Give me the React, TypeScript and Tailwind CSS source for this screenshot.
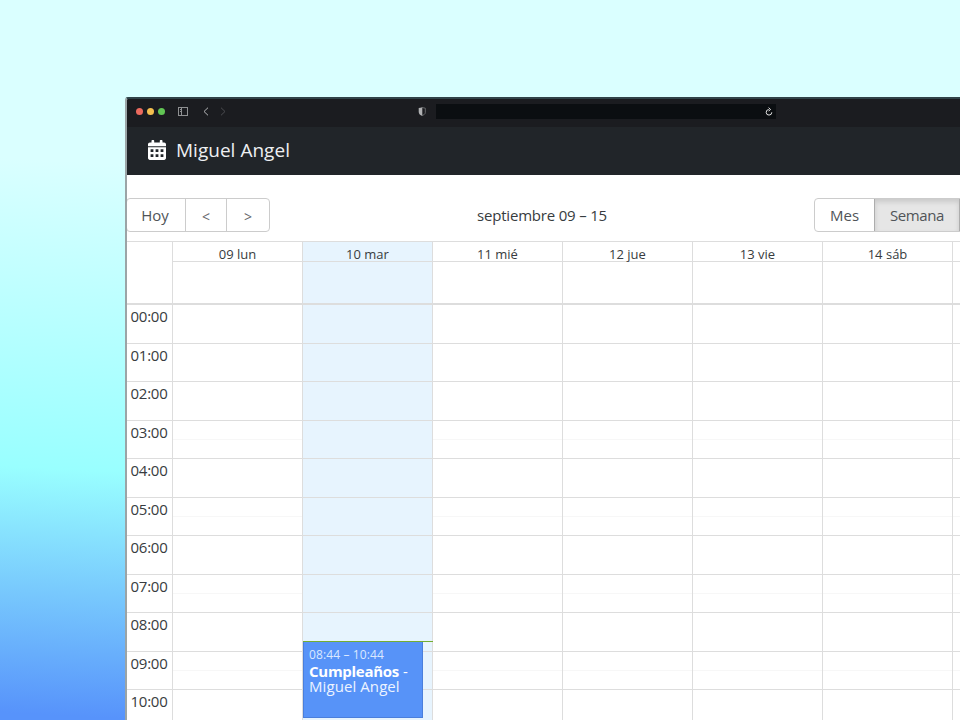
import React from "react";

const hours = ["00:00", "01:00", "02:00", "03:00", "04:00", "05:00", "06:00", "07:00", "08:00", "09:00", "10:00"];
const days = ["09 lun", "10 mar", "11 mié", "12 jue", "13 vie", "14 sáb", ""];

function TitleBar() {
  return (
    <div className="flex h-[28px] shrink-0 items-center bg-[#1b1c20] pb-[4px] pl-[10px]">
      <div className="flex gap-[4px]">
        <i className="size-[7px] rounded-full bg-[#ec6a5e]" />
        <i className="size-[7px] rounded-full bg-[#f4bf4f]" />
        <i className="size-[7px] rounded-full bg-[#61c554]" />
      </div>
      <svg className="ml-[13px]" width="10" height="9" viewBox="0 0 10 9" fill="none" stroke="#8f9092" strokeWidth="1" shapeRendering="crispEdges">
        <path d="M.5.5h9v8h-9zM3.500.5v8M1.500 2.500h1M1.500 4.500h1" />
      </svg>
      <svg className="ml-[15px]" width="6" height="9" viewBox="0 0 6 9" fill="none" stroke="#b5b6b8" strokeWidth="1"><path d="M5 .7 1 4.500l4 3.800" /></svg>
      <svg className="ml-[11px]" width="6" height="9" viewBox="0 0 6 9" fill="none" stroke="#4b4c50" strokeWidth="1"><path d="m1 .7 4 3.800-4 3.800" /></svg>
      <svg className="ml-[192px]" width="8" height="9" viewBox="0 0 8 9">
        <path d="M4.300.2C3 .6 1.800.8.7 1v4c0 2 1.500 3.200 3.600 4z" fill="#b0b1b3" />
        <path d="M4 .5C5.200.8 6.200.9 7.300 1.200v4.300c0 1.500-1.500 2.500-3.300 3" fill="none" stroke="#77787b" strokeWidth=".8" />
      </svg>
      <div className="ml-[10px] flex h-[15px] w-[340px] items-center justify-end bg-[#0b0e11] pr-[3px]">
        <svg width="8" height="9" viewBox="0 0 8 9" fill="none" stroke="#e4e4e4" strokeWidth="1">
          <path d="M3.800 2.500A2.800 2.800 0 1 0 6.800 5.300M3.600.6l2 1.900-2 1.500" />
        </svg>
      </div>
    </div>
  );
}

function CalendarIcon() {
  return (
    <svg className="mb-[2px]" width="18" height="20" viewBox="0 0 18 20" fill="#fff">
      <path d="M3.500 1c0-.6.4-1 1-1h.7c.6 0 1 .4 1 1v1.500h5.600V1c0-.6.4-1 1-1h.7c.6 0 1 .4 1 1v1.500h1.600c1.100 0 1.900.8 1.900 1.900V6.200H0V4.400c0-1.100.8-1.900 1.900-1.900h1.600z" />
      <path fillRule="evenodd" d="M0 7.200h18v10.900c0 1.100-.8 1.900-1.900 1.900H1.900C.8 20 0 19.200 0 18.100zM2.600 9.300v2.800h2.800V9.300zm5 0v2.800h2.800V9.300zm5 0v2.800h2.800V9.300zm-10 5v2.800h2.800v-2.800zm5 0v2.800h2.800v-2.800zm5 0v2.800h2.800v-2.800z" />
    </svg>
  );
}

function Toolbar() {
  return (
    <div className="mt-[23px] flex h-[34px] shrink-0 items-stretch whitespace-nowrap text-[15px] leading-none text-[#505458]">
      <div className="-ml-px flex w-[144px] rounded-[4px] border border-[#ccc]">
        <div className="flex w-[59px] items-center justify-center border-r border-[#ccc] pr-[2px] pt-px">Hoy</div>
        <div className="flex w-[41px] items-center justify-center border-r border-[#ccc] pt-[3px] text-[14px] text-[#66696c]">&lt;</div>
        <div className="flex flex-1 items-center justify-center pt-[3px] text-[14px] text-[#66696c]">&gt;</div>
      </div>
      <div className="flex w-[544px] items-center justify-center pt-px tracking-[-0.2px] text-[#373c40]">septiembre 09 – 15</div>
      <div className="flex w-[240px] shrink-0 rounded-[4px] border border-[#ccc]">
        <div className="flex w-[59px] items-center justify-center pt-px">Mes</div>
        <div className="flex w-[86px] items-center justify-center border-x border-[#adadad] bg-[#e6e6e6] pt-px tracking-[-0.42px] shadow-[inset_0_3px_5px_rgba(0,0,0,0.125)]">Semana</div>
        <div className="flex-1" />
      </div>
    </div>
  );
}

function EventCard() {
  return (
    <div className="absolute left-0 top-[336px] h-[77px] w-[120px] whitespace-nowrap border border-[#4a7fdc] bg-[#5793f8] pl-[5px] pt-[5px] text-[15px] leading-[15px] text-white">
      <div className="h-[17px] text-[12px] tracking-[0.12px] text-[#dbe8ff]">08:44 – 10:44</div>
      <div><b className="tracking-[-0.27px]">Cumpleaños</b> -</div>
      <div className="tracking-[0.08px] text-[#edf3ff]">Miguel Angel</div>
    </div>
  );
}

export default function App() {
  return (
    <div className="h-[720px] w-[960px] overflow-hidden bg-[linear-gradient(183deg,#daffff_0%,#daffff_27%,#99ffff_67%,#5793fb_99%)] pl-[125px] pt-[97px] font-['Open_Sans','Noto_Sans',sans-serif]">
      <div className="flex h-[640px] w-[1000px] flex-col overflow-hidden rounded-tl-[3px] border-l-2 border-t-2 border-l-[#9ba4a6] border-t-[#304348] bg-white">
        <div className="-ml-[2px] shrink-0 border-l border-[#34484c]">
          <TitleBar />
          <header className="flex h-[48px] items-center bg-[#212529] pl-[22px] text-[19px] leading-none text-[#eef0f2]">
            <CalendarIcon />
            <span className="mb-px ml-[10px] tracking-[0.02px]">Miguel Angel</span>
          </header>
        </div>
        <Toolbar />
        <section className="mt-[9px] flex shrink-0 border-t border-[#ddd] text-[13px] leading-[25px] text-[#383c40]">
          <div className="h-[63px] w-[46px] shrink-0 border-b-2 border-r border-[#ddd]" />
          {days.map((d, i) => (
            <div key={i} className={"h-[63px] w-[130px] shrink-0 border-b-2 border-r border-[#ddd] " + (i === 1 ? "bg-[#e7f4fe]" : "")}>
              <div className="h-[20px] border-b border-[#ddd] text-center">{d}</div>
            </div>
          ))}
        </section>
        <main className="flex shrink-0">
          <div className="w-[46px] shrink-0 border-r border-[#ddd] text-[15px] leading-[23px] tracking-[-0.26px] text-[#383c40]">
            {hours.map((h) => (
              <div key={h} className="h-[38.55px] border-b border-[#ddd] pl-[3.5px]">{h}</div>
            ))}
          </div>
          {days.map((d, i) => (
            <div key={i} className={"relative w-[130px] shrink-0 border-r border-[#ddd] " + (i === 1 ? "bg-[#e7f4fe]" : "")}>
              {hours.map((h, n) => (
                <div key={h} className="h-[38.55px] border-b border-[#ddd]">
                  {n % 2 === 1 && n > 2 && i !== 1 && <div className="h-[19px] border-b border-[#f7f7f7]" />}
                </div>
              ))}
              {i === 1 && <EventCard />}
              {i === 1 && <div className="absolute left-0 top-[336px] h-px w-[130px] bg-[#74ad31]" />}
            </div>
          ))}
        </main>
      </div>
    </div>
  );
}
